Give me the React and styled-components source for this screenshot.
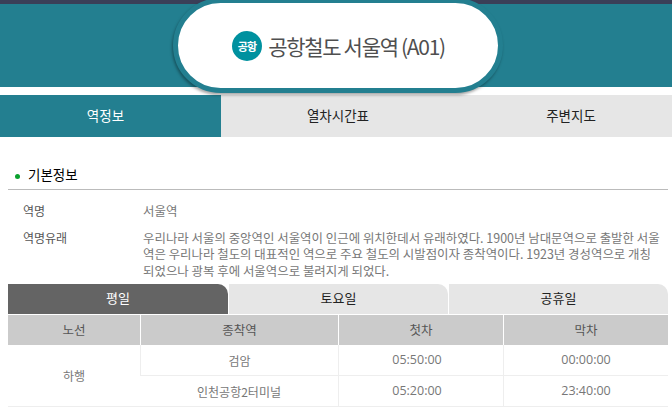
import React from 'react';
import styled, { createGlobalStyle } from 'styled-components';

const Global = createGlobalStyle`
  html, body {
    margin: 0;
    padding: 0;
    background: #fff;
    overflow: hidden;
  }
  * { box-sizing: border-box; }
  body {
    font-family: "Noto Sans CJK KR", "Noto Sans", sans-serif;
    color: #666;
  }
`;

const Page = styled.div`
  width: 672px;
  height: 408px;
  overflow: hidden;
  position: relative;
`;

const TopBar = styled.div`
  height: 4px;
  background: #3a3f58;
`;

const Header = styled.header`
  height: 83px;
  background: #237f90;
`;

const TitlePill = styled.div`
  position: absolute;
  left: 173px;
  top: -2px;
  width: 330px;
  height: 95px;
  border: 5px solid #237f90;
  border-radius: 48px;
  background: #fff;
  box-shadow: -1px 2px 3px rgba(0, 0, 0, 0.35);
  display: flex;
  align-items: center;
  justify-content: center;
  gap: 6px;
  padding-left: 1px;
`;

const Badge = styled.span`
  width: 30px;
  height: 30px;
  border-radius: 50%;
  background: #00919f;
  color: #fff;
  font-size: 11px;
  font-weight: 700;
  letter-spacing: -0.8px;
  display: flex;
  align-items: center;
  justify-content: center;
`;

const Title = styled.h1`
  margin: 0;
  font-size: 21px;
  line-height: 30px;
  font-weight: 400;
  letter-spacing: -1.3px;
  color: #4f4f4f;
`;

const MainTabs = styled.nav`
  margin-top: 8px;
  height: 42px;
  display: grid;
  grid-template-columns: 221px 226px 225px;
`;

const MainTab = styled.div`
  display: flex;
  align-items: center;
  justify-content: center;
  font-size: 13.5px;
  padding: ${p => p.$pad};
  background: ${p => (p.$active ? '#237f90' : '#e6e6e6')};
  color: ${p => (p.$active ? '#fff' : '#222')};
`;

const Content = styled.main`
  padding: 26px 4px 0 8px;
`;

const SectionTitle = styled.h2`
  margin: 0;
  height: 27px;
  border-bottom: 1px solid #bbb;
  padding-left: 7px;
  display: flex;
  align-items: flex-start;
  gap: 8px;
  font-size: 13.5px;
  line-height: 22px;
  font-weight: 400;
  color: #000;
`;

const Dot = styled.span`
  width: 5px;
  height: 5px;
  border-radius: 50%;
  background: #0aa12e;
  margin-top: 11px;
`;

const InfoList = styled.dl`
  margin: 12px 0 0;
  display: grid;
  grid-template-columns: 135px 1fr;
  row-gap: 9px;
`;

const InfoLabel = styled.dt`
  padding-left: 15px;
  font-size: 12px;
  line-height: 17px;
  color: #555;
`;

const InfoValue = styled.dd`
  margin: 0;
  padding-top: 1px;
  font-size: 12.45px;
  line-height: 16.5px;
  white-space: nowrap;
  color: #777;
`;

const DayTabs = styled.div`
  margin-top: 5px;
  height: 30px;
  display: grid;
  grid-template-columns: 220px 219px 219px;
  gap: 1px;
`;

const DayTab = styled.div`
  display: flex;
  align-items: center;
  justify-content: center;
  padding-bottom: 3px;
  border-top-right-radius: 10px;
  font-size: 13px;
  background: ${p => (p.$active ? '#646464' : '#e6e6e6')};
  color: ${p => (p.$active ? '#fff' : '#222')};
`;

const Table = styled.table`
  width: 660px;
  margin-top: 1px;
  border-collapse: separate;
  border-spacing: 0;
  table-layout: fixed;
`;

const HeadCell = styled.th`
  height: 30px;
  padding: 0 0 2px;
  background: #cbcbcb;
  border-left: 1px solid #fff;
  font-size: 12.5px;
  font-weight: 400;
  color: #555;
  &:first-child { border-left: 0; }
`;

const Cell = styled.td`
  height: 31px;
  padding: 0;
  text-align: center;
  border-left: 1px solid #eee;
  border-bottom: 1px solid #eee;
  font-size: 12px;
  color: #777;
  &:first-child { border-left: 0; }
`;

const TimeCell = styled(Cell)`
  padding: 0 ${p => p.$inset || 0}px 2px 0;
  font-family: "Open Sans", "Noto Sans", sans-serif;
  font-size: 12.5px;
`;

const rows = [
  { dest: '검암', first: '05:50:00', last: '00:00:00' },
  { dest: '인천공항2터미널', first: '05:20:00', last: '23:40:00' },
];

export default function App() {
  return (
    <Page>
      <Global />
      <TopBar />
      <Header />
      <TitlePill>
        <Badge>공항</Badge>
        <Title>공항철도 서울역 (A01)</Title>
      </TitlePill>
      <MainTabs>
        <MainTab $active $pad="0 10px 2px 0">역정보</MainTab>
        <MainTab $pad="0 0 2px 8px">열차시간표</MainTab>
        <MainTab $pad="0 0 2px 23px">주변지도</MainTab>
      </MainTabs>
      <Content>
        <SectionTitle><Dot />기본정보</SectionTitle>
        <InfoList>
          <InfoLabel>역명</InfoLabel>
          <InfoValue>서울역</InfoValue>
          <InfoLabel>역명유래</InfoLabel>
          <InfoValue>
            우리나라 서울의 중앙역인 서울역이 인근에 위치한데서 유래하였다. 1900년 남대문역으로 출발한 서울<br />
            역은 우리나라 철도의 대표적인 역으로 주요 철도의 시발점이자 종착역이다. 1923년 경성역으로 개칭<br />
            되었으나 광복 후에 서울역으로 불려지게 되었다.
          </InfoValue>
        </InfoList>
        <DayTabs>
          <DayTab $active>평일</DayTab>
          <DayTab>토요일</DayTab>
          <DayTab>공휴일</DayTab>
        </DayTabs>
        <Table>
          <colgroup>
            <col style={{ width: 132 }} />
            <col style={{ width: 198 }} />
            <col style={{ width: 165 }} />
            <col style={{ width: 165 }} />
          </colgroup>
          <thead>
            <tr>
              <HeadCell>노선</HeadCell>
              <HeadCell>종착역</HeadCell>
              <HeadCell>첫차</HeadCell>
              <HeadCell>막차</HeadCell>
            </tr>
          </thead>
          <tbody>
            {rows.map((r, i) => (
              <tr key={r.dest}>
                {i === 0 && <Cell rowSpan={2}>하행</Cell>}
                <Cell>{r.dest}</Cell>
                <TimeCell $inset={8}>{r.first}</TimeCell>
                <TimeCell>{r.last}</TimeCell>
              </tr>
            ))}
          </tbody>
        </Table>
      </Content>
    </Page>
  );
}
